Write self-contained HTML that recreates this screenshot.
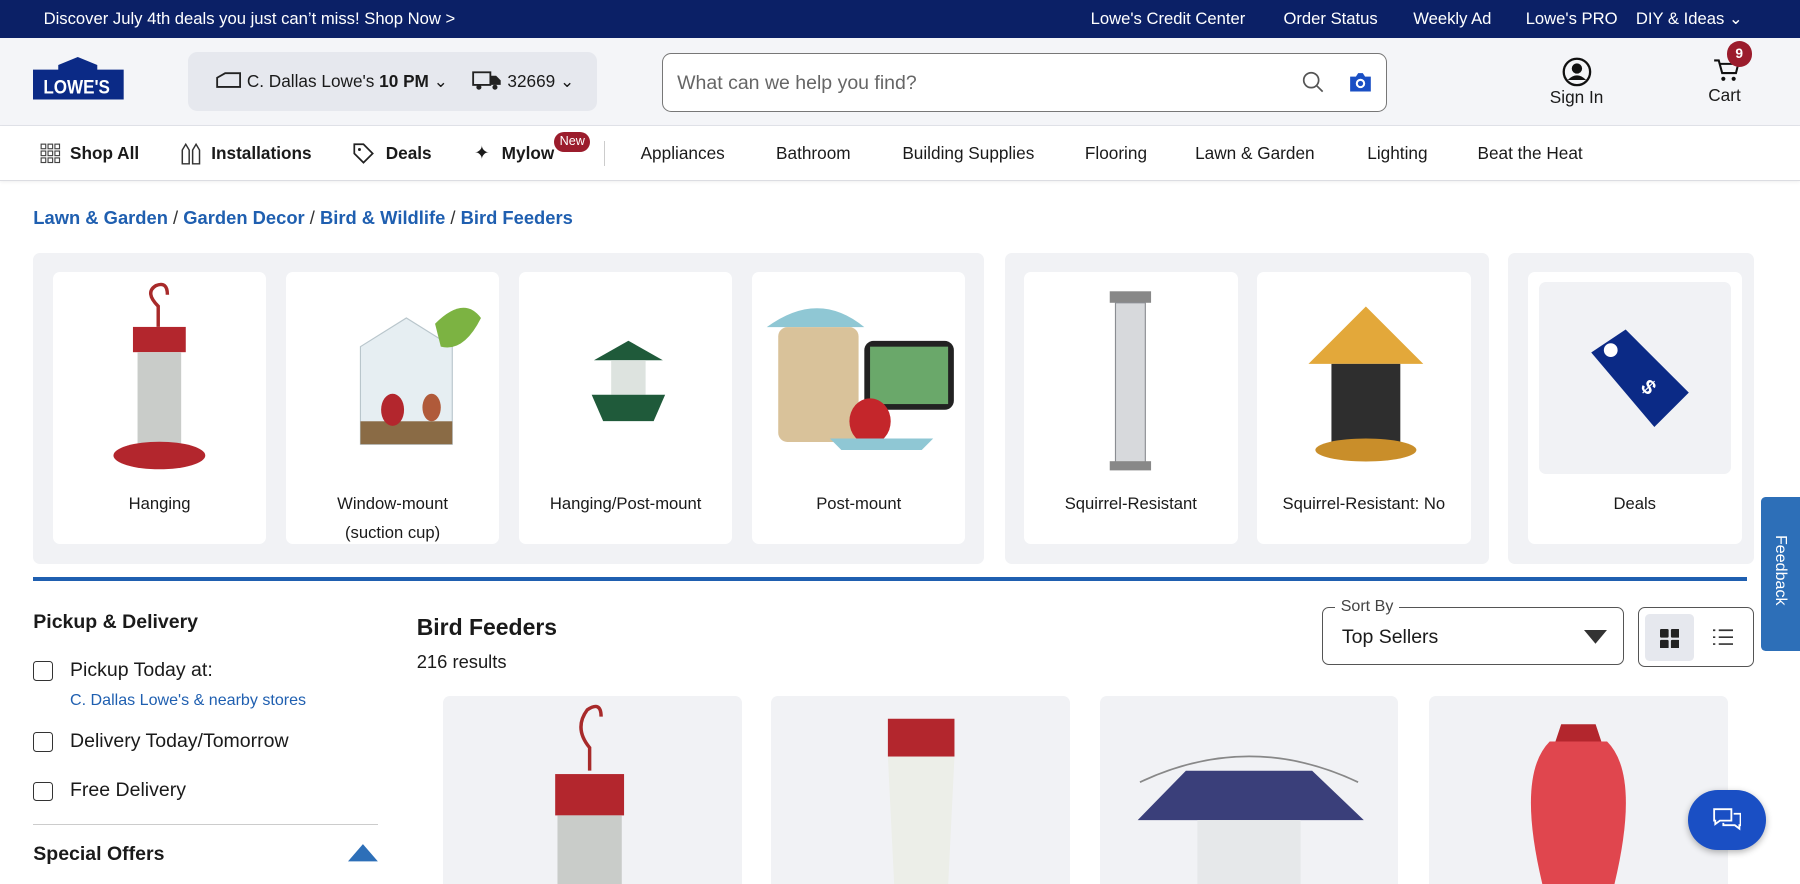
<!DOCTYPE html>
<html><head><meta charset="utf-8">
<style>
*{box-sizing:border-box;margin:0;padding:0}
html,body{width:1800px;height:884px;overflow:hidden;background:#fff}
#w{zoom:1.148;width:1568px;height:770px;position:relative;font-family:"Liberation Sans",Arial,sans-serif;color:#1a1a1a;overflow:hidden}
.a{position:absolute}
.top{left:0;top:0;width:1568px;height:33px;background:#0b2066;color:#fff;font-size:14.5px}
.top span{position:absolute;top:8px}
.hdr{left:0;top:33px;width:1568px;height:77px;background:#f4f5f8;border-bottom:1px solid #e2e4ea}
.nav{left:0;top:110px;width:1568px;height:48px;background:#fff;border-bottom:1px solid #dcdde2;box-shadow:0 1px 3px rgba(0,0,0,.08);font-size:15px}
.nav span{position:absolute;top:15px}
.b{font-weight:bold}
.panel{background:#f1f2f5;border-radius:6px;top:220px;height:271px}
.card{background:#fff;border-radius:6px;top:237px;width:186px;height:237px;overflow:hidden}
.card .l{position:absolute;left:0;right:0;top:190px;text-align:center;font-size:14.5px;line-height:25px}
.pc{background:#f1f2f5;border-radius:6px;top:606px;width:260px;height:170px;overflow:hidden}
.cb{width:17px;height:17px;border:1.5px solid #333;border-radius:3px;left:29px}
.blue{color:#1f5fb0}
</style></head><body><div id="w">
<div class="a top">
<span style="left:38px">Discover July 4th deals you just can’t miss! Shop Now &gt;</span>
<span style="left:950px">Lowe's Credit Center</span>
<span style="left:1118px">Order Status</span>
<span style="left:1231px">Weekly Ad</span>
<span style="left:1329px">Lowe's PRO</span>
<span style="left:1425px">DIY &amp; Ideas ⌄</span>
</div>
<div class="a hdr">
<svg class="a" style="left:29px;top:17px" width="79" height="37" viewBox="0 0 79 37"><path d="M0 11 L22 11 L22 7 L39 0 L56 7 L56 11 L79 11 L79 37 L0 37Z" fill="#0b2a86"/><text x="38" y="32" text-anchor="middle" fill="#fff" font-family="Liberation Sans" font-weight="bold" font-size="17" textLength="58" lengthAdjust="spacingAndGlyphs">LOWE'S</text></svg>
<div class="a" style="left:164px;top:12px;width:356px;height:52px;background:#e6e8ee;border-radius:8px;font-size:15px">
<svg class="a" style="left:24px;top:18px" width="22" height="14"><path d="M1 13V5L8 1H21V13Z" fill="none" stroke="#222" stroke-width="1.6"/></svg>
<span class="a" style="left:51px;top:17px">C. Dallas Lowe's <b>10 PM</b> ⌄</span>
<svg class="a" style="left:247px;top:16px" width="26" height="18"><rect x="1" y="2" width="15" height="11" fill="none" stroke="#222" stroke-width="1.6"/><path d="M16 5H21L25 9V13H16Z" fill="#222"/><circle cx="6" cy="15" r="2.2" fill="#222"/><circle cx="20" cy="15" r="2.2" fill="#222"/></svg>
<span class="a" style="left:278px;top:17px">32669 ⌄</span>
</div>
<div class="a" style="left:577px;top:13px;width:631px;height:52px;background:#fff;border:1px solid #777;border-radius:8px">
<span class="a" style="left:12px;top:16px;font-size:17px;color:#666">What can we help you find?</span>
<svg class="a" style="left:556px;top:15px" width="20" height="20"><circle cx="8" cy="8" r="6.5" fill="none" stroke="#555" stroke-width="1.5"/><path d="M13 13L18 18" stroke="#555" stroke-width="1.5"/></svg>
<svg class="a" style="left:597px;top:16px" width="20" height="18"><path d="M1 4H6L8 1H12L14 4H19V17H1Z" fill="#1a4fc4"/><circle cx="10" cy="10" r="3.2" fill="none" stroke="#fff" stroke-width="1.8"/></svg>
</div>
<svg class="a" style="left:1361px;top:17px" width="26" height="26"><circle cx="13" cy="13" r="11.5" fill="none" stroke="#111" stroke-width="2"/><circle cx="13" cy="10" r="4.5" fill="#111"/><path d="M5 20Q13 12 21 20" fill="#111"/></svg>
<span class="a" style="left:1350px;top:43px;font-size:15px">Sign In</span>
<svg class="a" style="left:1492px;top:17px" width="24" height="22"><path d="M1 3H5L8 14H20L22 6H6" fill="none" stroke="#111" stroke-width="1.8"/><circle cx="9" cy="19" r="1.8" fill="#111"/><circle cx="18" cy="19" r="1.8" fill="#111"/></svg>
<div class="a" style="left:1504px;top:3px;width:22px;height:22px;border-radius:50%;background:#9b1c2c;color:#fff;font-size:12px;font-weight:bold;text-align:center;line-height:22px">9</div>
<span class="a" style="left:1488px;top:41px;font-size:15px">Cart</span>
</div>
<div class="a nav">
<svg class="a" style="left:35px;top:15px" width="18" height="18"><g fill="none" stroke="#444" stroke-width="1"><rect x="1" y="1" width="4" height="4"/><rect x="7" y="1" width="4" height="4"/><rect x="13" y="1" width="4" height="4"/><rect x="1" y="7" width="4" height="4"/><rect x="7" y="7" width="4" height="4"/><rect x="13" y="7" width="4" height="4"/><rect x="1" y="13" width="4" height="4"/><rect x="7" y="13" width="4" height="4"/><rect x="13" y="13" width="4" height="4"/></g></svg>
<span class="b" style="left:61px">Shop All</span>
<svg class="a" style="left:157px;top:14px" width="20" height="20"><path d="M2 19V7L5 2L8 7V19ZM11 19V7L14 2L17 7V19Z" fill="none" stroke="#333" stroke-width="1.3"/></svg>
<span class="b" style="left:184px">Installations</span>
<svg class="a" style="left:307px;top:14px" width="20" height="20"><path d="M2 2H10L18 10L10 18L2 10Z" fill="none" stroke="#222" stroke-width="1.5"/><circle cx="6.5" cy="6.5" r="1.3" fill="#222"/></svg>
<span class="b" style="left:336px">Deals</span>
<span style="left:413px;top:14px;font-size:16px">✦</span>
<span class="b" style="left:437px">Mylow</span>
<div class="a" style="left:483px;top:5px;width:31px;height:17px;border-radius:9px;background:#9b1c2c;color:#fff;font-size:11px;text-align:center;line-height:17px">New</div>
<div class="a" style="left:526px;top:13px;width:1px;height:22px;background:#ccc"></div>
<span style="left:558px">Appliances</span><span style="left:676px">Bathroom</span><span style="left:786px">Building Supplies</span><span style="left:945px">Flooring</span><span style="left:1041px">Lawn &amp; Garden</span><span style="left:1191px">Lighting</span><span style="left:1287px">Beat the Heat</span>
</div>
<div class="a blue b" style="left:29px;top:180px;font-size:16px">Lawn &amp; Garden <span style="color:#333;font-weight:normal">/</span> Garden Decor <span style="color:#333;font-weight:normal">/</span> Bird &amp; Wildlife <span style="color:#333;font-weight:normal">/</span> Bird Feeders</div>
<div class="a panel" style="left:29px;width:828px"></div>
<div class="a panel" style="left:875px;width:422px"></div>
<div class="a panel" style="left:1314px;width:214px"></div>
<div class="a card" style="left:46px"><svg class="a" style="left:50px;top:8px" width="90" height="170"><path d="M42 40V22Q30 10 40 4Q50 0 50 12" fill="none" stroke="#a82a2a" stroke-width="3"/><rect x="20" y="40" width="46" height="22" fill="#b3262d"/><rect x="24" y="62" width="38" height="80" fill="#c9ccc9"/><ellipse cx="43" cy="152" rx="40" ry="12" fill="#b3262d"/></svg><div class="l">Hanging</div></div>
<div class="a card" style="left:249px"><svg class="a" style="left:35px;top:20px" width="140" height="150"><path d="M30 100L30 45L70 20L110 45L110 130L30 130Z" fill="#e6eef2" stroke="#b9c6cc"/><path d="M95 25Q120 0 135 20Q120 50 100 45Z" fill="#7cb342"/><rect x="30" y="110" width="80" height="20" fill="#8a6b45"/><ellipse cx="58" cy="100" rx="10" ry="14" fill="#b3262d"/><ellipse cx="92" cy="98" rx="8" ry="12" fill="#b05a3a"/></svg><div class="l">Window-mount<br>(suction cup)</div></div>
<div class="a card" style="left:452px"><svg class="a" style="left:45px;top:55px" width="100" height="90"><path d="M20 22L50 5L80 22Z" fill="#1f5a3a"/><rect x="35" y="22" width="30" height="30" fill="#dde3df"/><path d="M18 52H82L72 75H28Z" fill="#1f5a3a"/></svg><div class="l">Hanging/Post-mount</div></div>
<div class="a card" style="left:655px"><svg class="a" style="left:8px;top:20px" width="170" height="150"><path d="M5 28Q50 -5 90 28Z" fill="#8fc7d4"/><rect x="15" y="28" width="70" height="100" rx="8" fill="#d9c29a"/><rect x="90" y="40" width="78" height="60" rx="8" fill="#222"/><rect x="95" y="45" width="68" height="50" fill="#6aa86a"/><ellipse cx="95" cy="110" rx="18" ry="20" fill="#c4262b"/><path d="M60 125L150 125L140 135L70 135Z" fill="#8fc7d4"/></svg><div class="l">Post-mount</div></div>
<div class="a card" style="left:892px"><svg class="a" style="left:70px;top:15px" width="46" height="160"><rect x="5" y="2" width="36" height="10" fill="#888"/><rect x="10" y="12" width="26" height="140" fill="#d7d9dc" stroke="#8a8d92"/><rect x="5" y="150" width="36" height="8" fill="#888"/></svg><div class="l">Squirrel-Resistant</div></div>
<div class="a card" style="left:1095px"><svg class="a" style="left:35px;top:20px" width="120" height="150"><path d="M60 10L10 60H110Z" fill="#e3a83a"/><rect x="30" y="60" width="60" height="70" fill="#2e2e2e"/><ellipse cx="60" cy="135" rx="44" ry="10" fill="#c98e2a"/></svg><div class="l">Squirrel-Resistant: No</div></div>
<div class="a card" style="left:1331px"><div class="a" style="left:10px;top:9px;width:167px;height:167px;background:#f1f2f5;border-radius:6px"></div><svg class="a" style="left:40px;top:40px" width="110" height="100"><path d="M15 30L45 10L100 65L70 95Z" fill="#0b2a86"/><circle cx="32" cy="28" r="6" fill="#fff"/><text x="60" y="62" fill="#fff" font-size="18" font-weight="bold" transform="rotate(45 60 58)">$</text></svg><div class="l">Deals</div></div>
<div class="a" style="left:29px;top:503px;width:1493px;height:3px;background:#1f5fb0"></div>
<div class="a" style="left:1534px;top:433px;width:34px;height:134px;background:#2d6fb8;border-radius:4px 0 0 4px"><span class="a" style="color:#fff;font-size:14px;transform:rotate(90deg);transform-origin:left top;left:25px;top:33px">Feedback</span></div>
<div class="a b" style="left:29px;top:532px;font-size:17px">Pickup &amp; Delivery</div>
<div class="a cb" style="top:576px"></div><div class="a" style="left:61px;top:574px;font-size:17px">Pickup Today at:</div>
<div class="a blue" style="left:61px;top:602px;font-size:14px">C. Dallas Lowe's &amp; nearby stores</div>
<div class="a cb" style="top:638px"></div><div class="a" style="left:61px;top:636px;font-size:17px">Delivery Today/Tomorrow</div>
<div class="a cb" style="top:681px"></div><div class="a" style="left:61px;top:679px;font-size:17px">Free Delivery</div>
<div class="a" style="left:29px;top:718px;width:300px;height:1px;background:#ccc"></div>
<div class="a b" style="left:29px;top:734px;font-size:17px">Special Offers</div>
<svg class="a" style="left:303px;top:734px" width="26" height="17"><path d="M0 16L13 1L26 16Z" fill="#2d6fb8"/></svg>
<div class="a b" style="left:363px;top:535px;font-size:20px">Bird Feeders</div>
<div class="a" style="left:363px;top:567px;font-size:16px">216 results</div>
<div class="a" style="left:1152px;top:529px;width:263px;height:50px;border:1px solid #555;border-radius:6px"><span class="a" style="left:10px;top:-10px;background:#fff;padding:0 5px;font-size:14px;color:#444">Sort By</span><span class="a" style="left:16px;top:15px;font-size:17px">Top Sellers</span><svg class="a" style="left:227px;top:19px" width="20" height="12"><path d="M0 0H20L10 12Z" fill="#333"/></svg></div>
<div class="a" style="left:1427px;top:529px;width:101px;height:52px;border:1px solid #555;border-radius:6px"><div class="a" style="left:5px;top:5px;width:43px;height:41px;background:#e6e8ee;border-radius:4px"></div><svg class="a" style="left:18px;top:18px" width="17" height="17"><rect x="0" y="0" width="7.5" height="7.5" rx="1" fill="#222"/><rect x="9.5" y="0" width="7.5" height="7.5" rx="1" fill="#222"/><rect x="0" y="9.5" width="7.5" height="7.5" rx="1" fill="#222"/><rect x="9.5" y="9.5" width="7.5" height="7.5" rx="1" fill="#222"/></svg><svg class="a" style="left:64px;top:17px" width="18" height="16" stroke="#333" stroke-width="1.5"><path d="M0 2H2M5 2H18M0 8H2M5 8H18M0 14H2M5 14H18"/></svg></div>
<div class="a pc" style="left:386px"><svg class="a" style="left:90px;top:0" width="80" height="170"><path d="M38 65V45Q24 28 36 12Q48 4 48 18" fill="none" stroke="#a82a2a" stroke-width="3"/><rect x="8" y="68" width="60" height="36" fill="#b3262d"/><rect x="10" y="104" width="56" height="70" fill="#c9ccc9"/></svg></div>
<div class="a pc" style="left:672px"><svg class="a" style="left:95px;top:15px" width="70" height="160"><path d="M6 5H64V38H6Z" fill="#b3262d"/><path d="M6 38H64L58 160H12Z" fill="#eceee8"/></svg></div>
<div class="a pc" style="left:958px"><svg class="a" style="left:15px;top:40px" width="230" height="130"><path d="M20 35Q115 -10 210 35" fill="none" stroke="#888" stroke-width="1.5"/><path d="M60 25H170L215 68H18Z" fill="#3a3f7a"/><rect x="70" y="68" width="90" height="62" fill="#e6e8ea"/></svg></div>
<div class="a pc" style="left:1245px"><svg class="a" style="left:80px;top:10px" width="100" height="160"><path d="M35 15H65L70 30H30Z" fill="#b3262d"/><path d="M25 30Q-5 60 20 160H80Q105 60 75 30Z" fill="#e0464e"/></svg></div>
<div class="a" style="left:1470px;top:688px;width:68px;height:52px;border-radius:26px;background:#1a4fc4;box-shadow:0 2px 6px rgba(0,0,0,.3)"><svg class="a" style="left:22px;top:16px" width="25" height="20" fill="none" stroke="#fff" stroke-width="1.6"><path d="M1 1H16V11H6L2 14V11H1Z"/><path d="M18 5H24V15H23V18L19 15H9V13"/></svg></div>
</div></body></html>
